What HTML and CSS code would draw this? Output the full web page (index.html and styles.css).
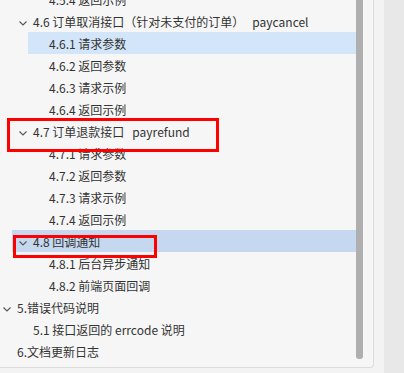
FILE: index.html
```html
<!DOCTYPE html>
<html lang="zh-CN">
<head>
    <meta charset="UTF-8">
    <meta name="viewport" content="width=device-width, initial-scale=1.0">
    <title>接口文档目录</title>
    <link rel="stylesheet" href="styles.css">
</head>
<body>
    <div class="page">
        <div class="main">
            <div class="panel">
                <div class="tree">
                    <div class="row lv2"><span class="caret none"></span>4.5.4 返回示例</div>

                    <div class="row lv1"><svg class="caret" viewBox="0 0 8 5"><path d="M0.5 0.5 L4 4 L7.5 0.5"/></svg>4.6 订单取消接口（针对未支付的订单）<span class="code">paycancel</span></div>
                    <div class="row lv2 active"><span class="caret none"></span>4.6.1 请求参数</div>
                    <div class="row lv2"><span class="caret none"></span>4.6.2 返回参数</div>
                    <div class="row lv2"><span class="caret none"></span>4.6.3 请求示例</div>
                    <div class="row lv2"><span class="caret none"></span>4.6.4 返回示例</div>

                    <div class="row lv1"><svg class="caret" viewBox="0 0 8 5"><path d="M0.5 0.5 L4 4 L7.5 0.5"/></svg>4.7 订单退款接口<span class="code">payrefund</span></div>
                    <div class="row lv2"><span class="caret none"></span>4.7.1 请求参数</div>
                    <div class="row lv2"><span class="caret none"></span>4.7.2 返回参数</div>
                    <div class="row lv2"><span class="caret none"></span>4.7.3 请求示例</div>
                    <div class="row lv2"><span class="caret none"></span>4.7.4 返回示例</div>

                    <div class="row lv1 selected"><svg class="caret" viewBox="0 0 8 5"><path d="M0.5 0.5 L4 4 L7.5 0.5"/></svg>4.8 回调通知</div>
                    <div class="row lv2"><span class="caret none"></span>4.8.1 后台异步通知</div>
                    <div class="row lv2"><span class="caret none"></span>4.8.2 前端页面回调</div>

                    <div class="row lv0"><svg class="caret" viewBox="0 0 8 5"><path d="M0.5 0.5 L4 4 L7.5 0.5"/></svg>5.错误代码说明</div>
                    <div class="row lv1"><span class="caret none"></span>5.1 接口返回的 errcode 说明</div>
                    <div class="row lv0"><span class="caret none"></span>6.文档更新日志</div>
                </div>
                <div class="scroll">
                    <div class="thumb"></div>
                </div>
            </div>
        </div>
        <div class="side"></div>

        <!-- annotation boxes -->
        <div class="mark mark-refund"></div>
        <div class="mark mark-notify"></div>
    </div>
</body>
</html>
```

FILE: styles.css
```css
* {
    margin: 0;
    padding: 0;
    box-sizing: border-box;
}

body {
    font-family: "Noto Sans CJK SC", "Noto Sans", sans-serif;
    font-size: 12px;
    color: #333;
    background: #e8e8e8;
}

.page {
    position: relative;
    display: flex;
    width: 404px;
    height: 373px;
    overflow: hidden;
}

.main {
    width: 384px;
    background: #f3f3f3;
}

.side {
    flex: 1;
    background: #e8e8e8;
}

.panel {
    display: flex;
    width: 374px;
    height: 368px;
    background: #f6f6f6;
    border-right: 1px solid #dcdcdc;
    border-bottom: 1px solid #dcdcdc;
    border-bottom-right-radius: 4px;
    overflow: hidden;
}

.tree {
    width: 356px;
    margin-top: -12px;
    overflow: hidden;
}

.row {
    display: flex;
    align-items: center;
    height: 22px;
    padding-left: 7px;
    white-space: nowrap;
}

.lv0 { margin-left: -4px; }
.lv1 { margin-left: 12px; }
.lv2 { margin-left: 28px; }

.row.active { background: #d3e5f8; }
.row.selected { background: #c6d8f0; }

.caret {
    width: 8px;
    height: 5px;
    margin-right: 6px;
    margin-top: 4px;
    flex-shrink: 0;
}

.caret path {
    fill: none;
    stroke: #555;
    stroke-width: 1.1;
}

.caret.none {
    display: inline-block;
}

.code {
    margin-left: 8px;
}

.scroll {
    width: 17px;
}

.thumb {
    width: 7px;
    height: 359px;
    background: #afafaf;
    border-radius: 0 0 3px 3px;
}

.mark {
    position: absolute;
    border: 3px solid #ff0000;
}

.mark-refund {
    left: 7px;
    top: 118px;
    width: 212px;
    height: 34px;
}

.mark-notify {
    left: 13px;
    top: 235px;
    width: 144px;
    height: 23px;
}
```
